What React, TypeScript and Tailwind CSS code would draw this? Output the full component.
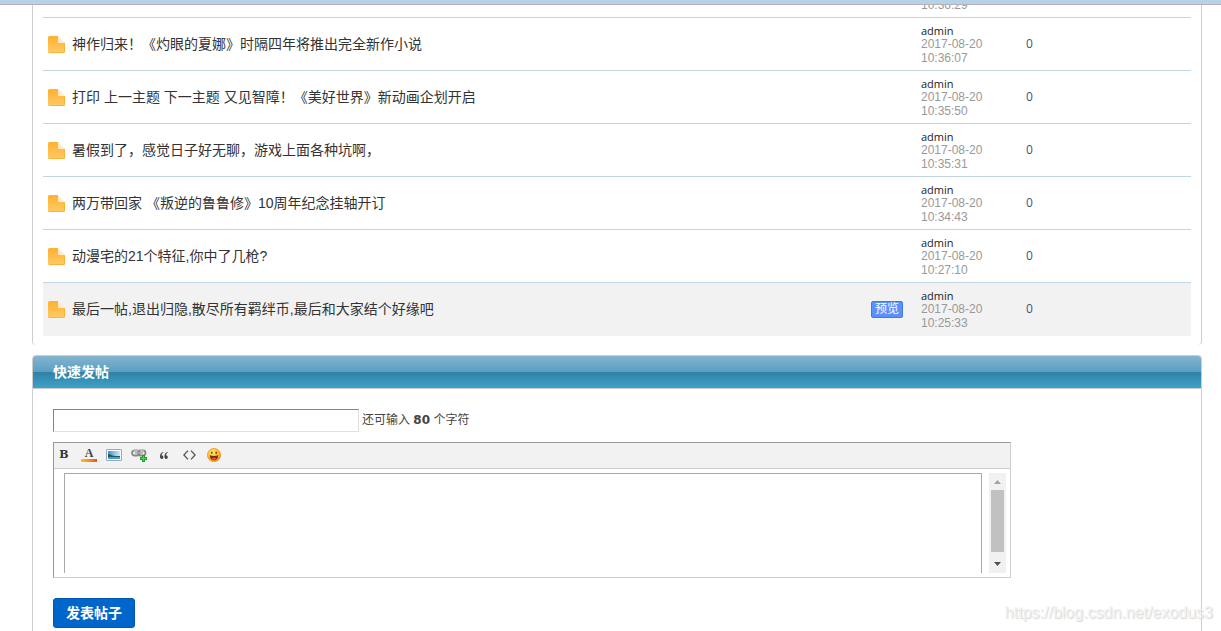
import { useState } from "react";

const MAX_TITLE = 80;

const threads = [
  { title: "神作归来！《灼眼的夏娜》时隔四年将推出完全新作小说", author: "admin", date: "2017-08-20", time: "10:36:07", replies: 0 },
  { title: "打印 上一主题 下一主题 又见智障！《美好世界》新动画企划开启", author: "admin", date: "2017-08-20", time: "10:35:50", replies: 0 },
  { title: "暑假到了，感觉日子好无聊，游戏上面各种坑啊，", author: "admin", date: "2017-08-20", time: "10:35:31", replies: 0 },
  { title: "两万带回家 《叛逆的鲁鲁修》10周年纪念挂轴开订", author: "admin", date: "2017-08-20", time: "10:34:43", replies: 0 },
  { title: "动漫宅的21个特征,你中了几枪?", author: "admin", date: "2017-08-20", time: "10:27:10", replies: 0 },
  { title: "最后一帖,退出归隐,散尽所有羁绊币,最后和大家结个好缘吧", author: "admin", date: "2017-08-20", time: "10:25:33", replies: 0, preview: true },
];

function PageIcon() {
  return (
    <svg width="17" height="17" viewBox="0 0 17 17" className="shrink-0" aria-hidden="true">
      <defs>
        <linearGradient id="page" x1="0" y1="0" x2="0" y2="1">
          <stop offset="0" stopColor="#ffb02e" />
          <stop offset="1" stopColor="#ffcb68" />
        </linearGradient>
      </defs>
      <path d="M1.500 0H10v5.500L11.500 7H17v8.500a1.500 1.500 0 0 1-1.500 1.500h-14A1.500 1.500 0 0 1 0 15.500V1.500A1.500 1.500 0 0 1 1.500 0z" fill="url(#page)" />
      <path d="M.5 15.500a1 1 0 0 0 1 1h14a1 1 0 0 0 1-1V7.500" fill="none" stroke="#ffb133" />
      <path d="M10 0l7 7h-5.500A1.500 1.500 0 0 1 10 5.500z" fill="#fdebcb" />
    </svg>
  );
}

function BoldIcon() {
  return <span className="font-['DejaVu_Serif',serif] text-[11px] leading-4 font-bold text-[#333]">B</span>;
}

function ColorIcon() {
  return (
    <span className="flex w-4 flex-col items-center">
      <span className="font-['Liberation_Serif',serif] text-xs leading-[10px] font-bold text-[#444]">A</span>
      <span className="mt-px h-[3px] w-4 bg-linear-to-r from-[#fcc21f] to-[#ee4f1c]" />
    </span>
  );
}

function ImageIcon() {
  return (
    <svg width="16" height="12" viewBox="0 0 16 12" aria-hidden="true">
      <defs>
        <linearGradient id="sky" x1="0" y1="0" x2="1" y2="0">
          <stop offset="0" stopColor="#3d8edb" />
          <stop offset="1" stopColor="#cdeaf8" />
        </linearGradient>
      </defs>
      <rect x=".5" y=".5" width="15" height="11" rx=".5" fill="#fff" stroke="#93aabd" />
      <rect x="2" y="2" width="12" height="8" fill="url(#sky)" />
      <path d="M2 5c3 0 4 2 7 2h5v1H2z" fill="#215b52" />
      <path d="M2 8h12v2H2z" fill="#4b9bcf" />
    </svg>
  );
}

function LinkIcon() {
  return (
    <svg width="16" height="13" viewBox="0 0 16 13" aria-hidden="true">
      <g fill="none">
        <rect x="1" y="1.500" width="7.500" height="5" rx="2.500" stroke="#888" strokeWidth="1.800" />
        <rect x="7" y="1.500" width="7.500" height="5" rx="2.500" stroke="#888" strokeWidth="1.800" />
        <path d="M2.500 1.700h5M9 1.700h4" stroke="#d0d3d0" strokeWidth=".8" />
        <path d="M4 4h8" stroke="#aaa" strokeWidth="1.500" />
      </g>
      <path d="M11 6h3v2h2v3h-2v2h-3v-2H9V8h2z" fill="#1fa035" />
      <path d="M12 7h1v2h2v1h-2v2h-1v-2h-2V9h2z" fill="#4fd158" />
    </svg>
  );
}

function QuoteIcon() {
  return (
    <svg width="8" height="7" viewBox="0 0 8 7" fill="#444" aria-hidden="true">
      <path d="M3.300 0C1.200.5 0 2 0 4.500 0 6 .6 7 1.700 7c1 0 1.700-.7 1.700-1.700S2.700 3.600 1.800 3.600C1.700 2.300 2.200 1.300 3.500.6z" />
      <path d="M7.700 0C5.600.5 4.400 2 4.400 4.500 4.400 6 5 7 6.100 7c1 0 1.700-.7 1.700-1.700s-.7-1.700-1.600-1.700C6.100 2.300 6.600 1.300 7.900.6z" />
    </svg>
  );
}

function CodeIcon() {
  return (
    <svg width="13" height="10" viewBox="0 0 13 10" fill="none" stroke="#555" strokeWidth="1.300" aria-hidden="true">
      <path d="M5 .6L.9 5 5 9.400M8 .6L12.100 5 8 9.400" />
    </svg>
  );
}

function SmileIcon() {
  return (
    <svg width="14" height="14" viewBox="0 0 14 14" aria-hidden="true">
      <defs>
        <radialGradient id="face" cx=".4" cy=".3" r=".7">
          <stop offset="0" stopColor="#ffe96b" />
          <stop offset=".6" stopColor="#fdbd2c" />
          <stop offset="1" stopColor="#ee8a1d" />
        </radialGradient>
      </defs>
      <circle cx="7" cy="7" r="6.600" fill="url(#face)" stroke="#e98f25" strokeWidth=".7" />
      <ellipse cx="4.800" cy="4.800" rx=".8" ry="1.300" fill="#7c3f10" />
      <ellipse cx="9.200" cy="4.800" rx=".8" ry="1.300" fill="#7c3f10" />
      <path d="M2.800 7.300c2.800.8 5.600.8 8.400 0 0 3-1.600 4.900-4.200 4.900s-4.200-1.900-4.200-4.900z" fill="#7b2f0c" />
      <path d="M4.800 10.600c1.200-1.300 3.200-1.300 4.400 0-1 1.500-3.400 1.500-4.400 0z" fill="#f2643c" />
    </svg>
  );
}

const tools = [
  { label: "粗体", Icon: BoldIcon },
  { label: "颜色", Icon: ColorIcon },
  { label: "图片", Icon: ImageIcon },
  { label: "链接", Icon: LinkIcon },
  { label: "引用", Icon: QuoteIcon },
  { label: "代码", Icon: CodeIcon },
  { label: "表情", Icon: SmileIcon },
];

function ThreadList() {
  return (
    <section className="rounded-b border-x border-[#cdcdcd] px-[10px] pb-[9px]">
      <table className="w-full table-fixed border-collapse">
        <colgroup>
          <col />
          <col className="w-[105px]" />
          <col className="w-[165px]" />
        </colgroup>
        <tbody>
          <tr>
            <td className="p-0" />
            <td className="p-0">
              <div className="flex h-3 items-end overflow-hidden pb-[5px] text-xs leading-[14px] text-[#999]">10:36:29</div>
            </td>
            <td className="p-0" />
          </tr>
          {threads.map((thread) => (
            <tr key={thread.time} className={thread.preview ? "h-[53px] border-t border-[#c2d5e3] bg-[#f2f2f2]" : "h-[53px] border-t border-[#c2d5e3]"}>
              <td className="p-0 pr-[18px] pl-[5px]">
                <div className="flex items-center gap-[7px]">
                  <PageIcon />
                  <a href="#" className="min-w-0 flex-1 truncate text-sm text-[#333] [text-spacing-trim:space-all]">
                    {thread.title}
                  </a>
                  {thread.preview && (
                    <button type="button" className="h-[17px] rounded-xs border border-[#3f78e8] bg-[#5c91fa] px-[3px] text-xs leading-[15px] text-white">
                      预览
                    </button>
                  )}
                </div>
              </td>
              <td className="p-0 text-xs leading-[14px] text-[#999]">
                <a href="#" className="block font-['Open_Sans',sans-serif] text-[11px] leading-[13px] text-[#222]">
                  {thread.author}
                </a>
                <div>{thread.date}</div>
                <div>{thread.time}</div>
              </td>
              <td className="p-0 font-['Open_Sans',sans-serif] text-xs text-[#3f5277]">{thread.replies}</td>
            </tr>
          ))}
        </tbody>
      </table>
    </section>
  );
}

function QuickPost() {
  const [title, setTitle] = useState("");

  return (
    <section className="mt-[10px] flex flex-1 flex-col">
      <h2 className="h-[34px] rounded-t border border-[#cdcdcd] bg-[linear-gradient(#85b4ce_0,#589fc4_50%,#2f80a3_50%,#3fa2cb_100%)] px-5 text-sm leading-8 font-bold text-white">
        快速发帖
      </h2>
      <form className="flex-1 border-x border-[#cdcdcd] px-5 pt-5 pb-[3px]" onSubmit={(e) => e.preventDefault()}>
        <div className="flex items-center gap-[3px]">
          <input
            type="text"
            aria-label="标题"
            value={title}
            maxLength={MAX_TITLE}
            onChange={(e) => setTitle(e.target.value)}
            className="h-[23px] w-[306px] border border-t-[#848484] border-r-[#e0e0e0] border-b-[#e0e0e0] border-l-[#848484] bg-white px-1 text-xs outline-none"
          />
          <span className="text-xs text-[#444]">
            还可输入 <strong className="font-['DejaVu_Sans',sans-serif]">{MAX_TITLE - title.length}</strong> 个字符
          </span>
        </div>

        <div className="mt-[10px] w-[958px] max-w-full border border-t-[#999] border-r-[#cdcdcd] border-b-[#cdcdcd] border-l-[#999]">
          <div className="flex h-[26px] border-b border-[#cdcdcd] bg-[#f2f2f2]">
            {tools.map(({ label, Icon }) => (
              <button key={label} type="button" aria-label={label} className="flex w-[25px] items-center justify-center pr-[5px]">
                <Icon />
              </button>
            ))}
          </div>
          <div className="flex gap-[7px] pt-1 pr-1 pb-1 pl-[10px]">
            <textarea
              aria-label="内容"
              className="block h-[100px] flex-1 resize-none border border-b-0 border-[#a9a9a9] bg-white p-1 text-xs outline-none"
            />
            <div className="flex w-[17px] flex-col items-center justify-between bg-[#f1f1f1]" aria-hidden="true">
              <svg width="17" height="17" viewBox="0 0 17 17" fill="#a3a3a3">
                <path d="M5 11h7L8.500 7z" />
              </svg>
              <div className="w-[13px] flex-1 bg-[#c1c1c1]" />
              <svg width="17" height="21" viewBox="0 0 17 21" fill="#505050">
                <path d="M5 10h7l-3.500 4z" />
              </svg>
            </div>
          </div>
        </div>

        <button type="submit" className="mt-5 h-[30px] rounded-[3px] border border-[#0058ae] bg-[#06c] px-3 text-sm leading-7 font-bold text-white">
          发表帖子
        </button>
      </form>
    </section>
  );
}

export default function App() {
  return (
    <div className="relative flex min-h-screen flex-col bg-white font-['Liberation_Sans','Noto_Sans_CJK_SC',sans-serif]">
      <header className="h-[5px] border-b border-[#b5b1b8] bg-[#b6d2e6]" />
      <main className="mr-[19px] ml-8 flex flex-1 flex-col">
        <ThreadList />
        <QuickPost />
      </main>
      <div className="pointer-events-none absolute right-2 bottom-1.5 text-base text-[#f2f2f2] [text-shadow:1px_1px_1px_#d4d4d4]">
        https://blog.csdn.net/exodus3
      </div>
    </div>
  );
}
